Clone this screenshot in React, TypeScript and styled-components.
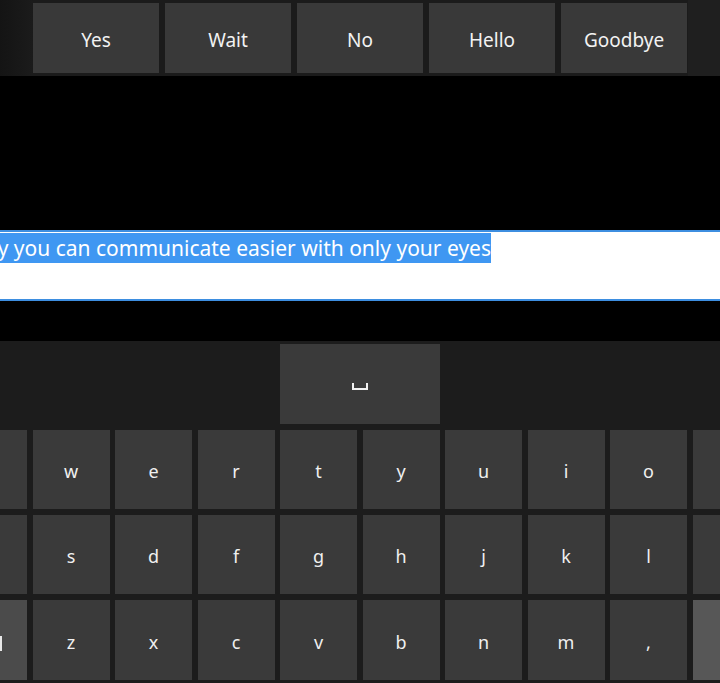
import React from "react";
import styled, { createGlobalStyle } from "styled-components";

const Global = createGlobalStyle`
  html, body { margin: 0; padding: 0; background: #000; }
  body { width: 720px; height: 683px; overflow: hidden; font-family: "Noto Sans", "Open Sans", sans-serif; }
`;

const Page = styled.div`
  width: 720px;
  height: 683px;
  display: flex;
  flex-direction: column;
  background: #000;
  overflow: hidden;
`;

const PhraseBar = styled.div`
  height: 76px;
  box-sizing: border-box;
  padding: 3px 0 0 33px;
  display: flex;
  gap: 6px;
  background: linear-gradient(90deg, #141414 0px, #1b1b1b 33px, #1b1b1b 688px, #1f1f1f 688px);
`;

const PhraseButton = styled.div`
  width: 126px;
  height: 70px;
  background: #393939;
  color: #f2f2f2;
  display: flex;
  align-items: center;
  justify-content: center;
  font-size: 19px;
  padding-top: 3px;
  box-sizing: border-box;
`;

const Spacer = styled.div<{ $h: number }>`
  height: ${(p) => p.$h}px;
  flex: none;
`;

const TextBox = styled.div`
  height: 71px;
  box-sizing: border-box;
  background: #fff;
  border-top: 2px solid #3d8ee0;
  border-bottom: 2px solid #3d8ee0;
  padding-top: 1px;
  overflow: hidden;
`;

const TextLine = styled.div`
  width: 491px;
  display: flex;
  justify-content: flex-end;
  white-space: nowrap;
`;

const Selected = styled.span`
  background: #3f97f2;
  color: #fff;
  font-size: 21px;
  line-height: 30px;
  height: 30px;
  display: block;
`;

const Keyboard = styled.div`
  flex: 1;
  background: #1c1c1c;
  padding-top: 3px;
  display: flex;
  flex-direction: column;
  gap: 6px;
`;

const KeyRow = styled.div<{ $h: number }>`
  display: grid;
  grid-template-columns: 27px repeat(8, 77px) 1fr;
  column-gap: 5.5px;
  height: ${(p) => p.$h}px;
`;

const Key = styled.div<{ $tone?: "normal" | "light" | "lighter"; $span?: number; $start?: number; $align?: string }>`
  background: ${(p) => (p.$tone === "light" ? "#4b4b4b" : p.$tone === "lighter" ? "#575757" : "#3a3a3a")};
  color: #f0f0f0;
  display: flex;
  align-items: center;
  justify-content: ${(p) => p.$align || "center"};
  font-size: 18px;
  padding-top: 3px;
  box-sizing: border-box;
  ${(p) => (p.$start ? `grid-column: ${p.$start} / span ${p.$span || 1};` : "")}
`;

const SpaceGlyph = styled.span`
  width: 12px;
  height: 5px;
  border: 2px solid #f0f0f0;
  border-top: none;
  margin-top: 2px;
`;

const EdgeGlyph = styled.span`
  width: 2px;
  height: 15px;
  background: #e8e8e8;
  margin-top: 4px;
`;

const phrases = ["Yes", "Wait", "No", "Hello", "Goodbye"];
const row1 = ["", "w", "e", "r", "t", "y", "u", "i", "o", ""];
const row2 = ["", "s", "d", "f", "g", "h", "j", "k", "l", ""];
const row3 = ["", "z", "x", "c", "v", "b", "n", "m", ",", ""];

export default function App() {
  return (
    <Page>
      <Global />
      <PhraseBar>
        {phrases.map((p) => (
          <PhraseButton key={p}>{p}</PhraseButton>
        ))}
      </PhraseBar>
      <Spacer $h={154} />
      <TextBox>
        <TextLine>
          <Selected>This way you can communicate easier with only your eyes</Selected>
        </TextLine>
      </TextBox>
      <Spacer $h={40} />
      <Keyboard>
        <KeyRow $h={80}>
          <Key $start={5} $span={2}>
            <SpaceGlyph />
          </Key>
        </KeyRow>
        <KeyRow $h={79}>
          {row1.map((k, i) => (
            <Key key={i}>{k}</Key>
          ))}
        </KeyRow>
        <KeyRow $h={79}>
          {row2.map((k, i) => (
            <Key key={i}>{k}</Key>
          ))}
        </KeyRow>
        <KeyRow $h={80}>
          {row3.map((k, i) =>
            i === 0 ? (
              <Key key={i} $tone="light" $align="flex-start">
                <EdgeGlyph />
              </Key>
            ) : i === 9 ? (
              <Key key={i} $tone="lighter" />
            ) : (
              <Key key={i}>{k}</Key>
            )
          )}
        </KeyRow>
      </Keyboard>
    </Page>
  );
}
